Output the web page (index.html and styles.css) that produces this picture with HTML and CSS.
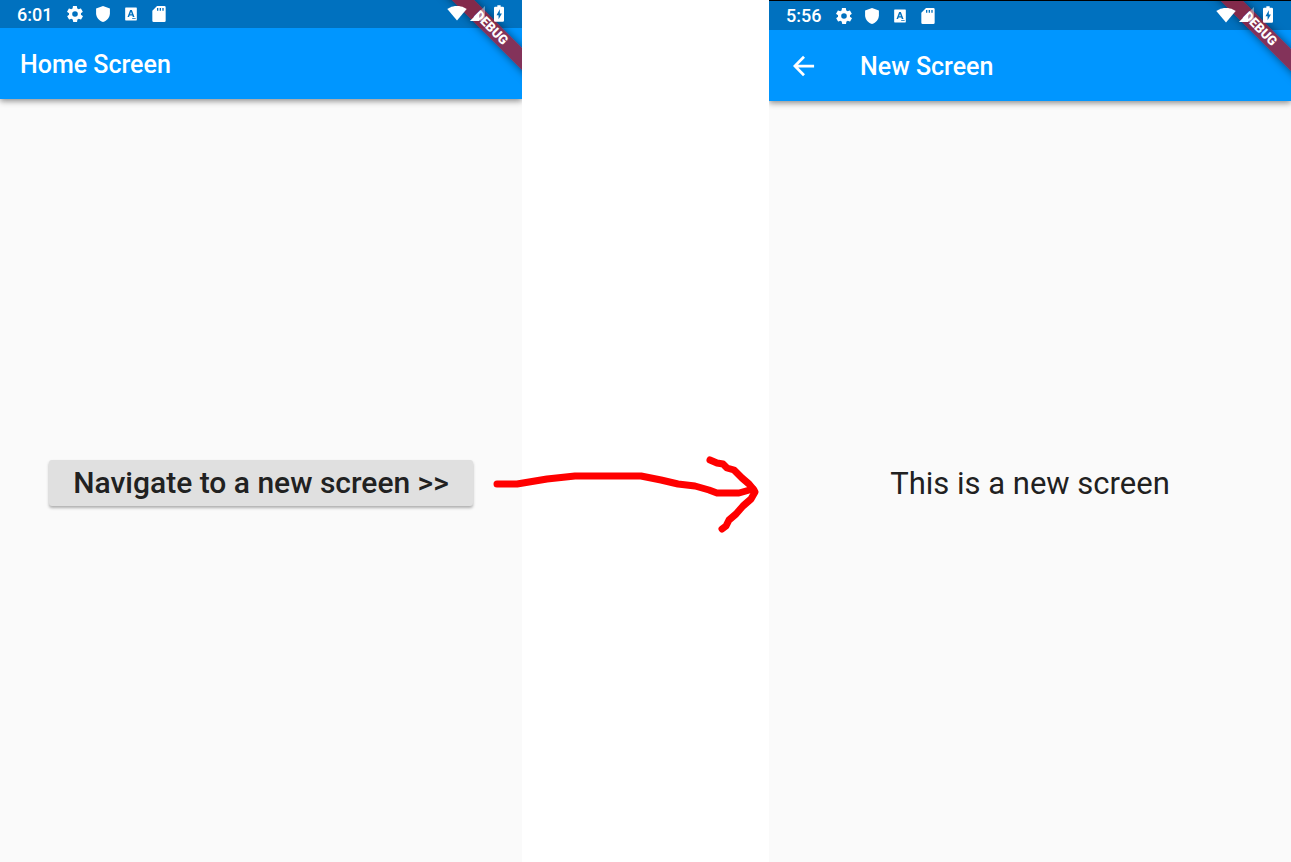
FILE: index.html
```html
<!DOCTYPE html>
<html lang="en">
<head>
    <meta charset="UTF-8">
    <meta name="viewport" content="width=device-width, initial-scale=1.0">
    <title>Navigate to a new screen</title>
    <link rel="stylesheet" href="styles.css">
</head>
<body>
    <!-- Shared status bar icons -->
    <svg class="icon-defs" aria-hidden="true">
        <symbol id="gear" viewBox="2 2 20 20">
            <path fill-rule="evenodd" d="M19.4 13c0-.3.1-.6.1-1s0-.7-.1-1l2.1-1.600c.2-.2.3-.4.1-.6l-2-3.500c-.1-.2-.4-.3-.6-.2l-2.500 1c-.5-.4-1.100-.7-1.700-1l-.4-2.600c0-.3-.2-.5-.5-.5h-4c-.2 0-.4.200-.5.400l-.4 2.700c-.6.2-1.100.6-1.700 1l-2.500-1c-.2-.1-.5 0-.6.200l-2 3.500c-.1.2-.1.5.1.6L4.600 11c0 .300-.1.700-.1 1s0 .7.100 1l-2.100 1.600c-.2.2-.3.400-.1.600l2 3.500c.1.2.4.3.6.2l2.500-1c.5.4 1.100.7 1.700 1l.4 2.600c0 .3.200.5.500.5h4c.2 0 .5-.2.500-.4l.4-2.700c.6-.2 1.200-.6 1.700-1l2.500 1c.2.1.5 0 .6-.2l2-3.500c.1-.2.1-.5-.1-.6L19.400 13zM12 15.500a3.500 3.500 0 1 1 0-7 3.500 3.500 0 0 1 0 7z"/>
        </symbol>
        <symbol id="shield" viewBox="1 1 22 22">
            <path d="M12 1L2.500 4.500V11c0 5.500 4 10.700 9.500 12 5.500-1.300 9.500-6.500 9.500-12V4.500L12 1z"/>
        </symbol>
        <symbol id="letter" viewBox="0 0 24 24">
            <path fill-rule="evenodd" d="M3 1h18a1 1 0 0 1 1 1v20a1 1 0 0 1-1 1H3a1 1 0 0 1-1-1V2a1 1 0 0 1 1-1zM10.500 5L6 17h2.700l.8-2.500h4.800l.8 2.500H18L13.500 5zM12 8l1.500 4.500h-3zM14 19v1h6v-1z"/>
        </symbol>
        <symbol id="sdcard" viewBox="0 0 24 24">
            <path fill-rule="evenodd" d="M9 0h11a2 2 0 0 1 2 2v20a2 2 0 0 1-2 2H4a2 2 0 0 1-2-2V7zM9 3v4h2V3zM13 3v4h2V3zM17 3v4h2V3z"/>
        </symbol>
        <symbol id="wifi" viewBox="0 0 24 18">
            <path d="M12 18L.4 4.200C1 3.700 5 .5 12 .5s11 3.200 11.600 3.700z"/>
        </symbol>
        <symbol id="signal" viewBox="0 0 18 18">
            <path opacity=".4" d="M0 18h18V0z"/>
            <path d="M0 18h11V7z"/>
        </symbol>
        <symbol id="battery" viewBox="0 0 12 20">
            <path fill-rule="evenodd" d="M4 0h4v2h2.500A1.500 1.500 0 0 1 12 3.500v15a1.500 1.500 0 0 1-1.500 1.500h-9A1.500 1.500 0 0 1 0 18.500v-15A1.500 1.500 0 0 1 1.500 2H4zM7 5l-4 7h2.500v5l4-7H7z"/>
        </symbol>
    </svg>

    <main class="flow">
        <section class="phone">
            <header class="header">
                <div class="status-bar">
                    <span class="time">6:01</span>
                    <svg class="status-icon"><use href="#gear"/></svg>
                    <svg class="status-icon"><use href="#shield"/></svg>
                    <svg class="status-icon small"><use href="#letter"/></svg>
                    <svg class="status-icon"><use href="#sdcard"/></svg>
                    <div class="system-icons">
                        <svg class="wifi"><use href="#wifi"/></svg>
                        <svg class="signal"><use href="#signal"/></svg>
                        <svg class="battery"><use href="#battery"/></svg>
                    </div>
                </div>
                <div class="app-bar">
                    <h1>Home Screen</h1>
                </div>
                <div class="debug"><span>DEBUG</span></div>
            </header>
            <div class="content">
                <button class="navigate-btn" type="button">Navigate to a new screen &gt;&gt;</button>
            </div>
        </section>

        <div class="link">
            <svg class="arrow" viewBox="522 412 247 140" aria-hidden="true">
                <path d="M497 484h20l30-5 28-3h66l20 4 17 4 17 2 14 4 8 3h22l14-4"/>
                <path d="M710 460l7 3 6 1 4 4 7 2 8 8 7 6 5 6 1 2-4 7-8 7-7 8-7 6-3 6-4 3"/>
            </svg>
        </div>

        <section class="phone second">
            <header class="header">
                <div class="status-bar">
                    <span class="time">5:56</span>
                    <svg class="status-icon"><use href="#gear"/></svg>
                    <svg class="status-icon"><use href="#shield"/></svg>
                    <svg class="status-icon small"><use href="#letter"/></svg>
                    <svg class="status-icon"><use href="#sdcard"/></svg>
                    <div class="system-icons">
                        <svg class="wifi"><use href="#wifi"/></svg>
                        <svg class="signal"><use href="#signal"/></svg>
                        <svg class="battery"><use href="#battery"/></svg>
                    </div>
                </div>
                <div class="app-bar">
                    <button class="back-btn" type="button" aria-label="Back">
                        <svg viewBox="0 0 24 24"><path d="M23 12H3M12 2L2 12l10 10"/></svg>
                    </button>
                    <h1>New Screen</h1>
                </div>
                <div class="debug"><span>DEBUG</span></div>
            </header>
            <div class="content">
                <p>This is a new screen</p>
            </div>
        </section>
    </main>
</body>
</html>
```
FILE: styles.css
```css
* {
    box-sizing: border-box;
}
body {
    margin: 0;
    background: #fff;
    color: #212121;
    font-family: Roboto, sans-serif;
}
.icon-defs {
    display: none;
}
.flow {
    display: grid;
    grid-template-columns: 522fr 247fr 522fr;
    min-height: 100vh;
}
.phone {
    display: flex;
    flex-direction: column;
    min-width: 0;
    background: #fafafa;
    overflow: hidden;
}
.second {
    border-top: 1px solid #000;
}
.header {
    position: relative;
    background: #0096ff;
    box-shadow: 0 2px 6px rgba(0, 0, 0, 0.45);
    color: #fff;
}
.status-bar {
    display: flex;
    align-items: center;
    gap: 12px;
    height: 28px;
    padding: 0 18px 0 17px;
    background: #0071bf;
}
.second .status-bar {
    height: 29px;
}
.time {
    margin-right: 3px;
    font-size: 18px;
    font-weight: 500;
}
.status-icon {
    width: 16px;
    height: 16px;
    fill: #fff;
}
.small {
    height: 14px;
}
/* system icons stay above the ribbon */
.system-icons {
    display: flex;
    position: relative;
    z-index: 1;
    align-items: center;
    gap: 3px;
    margin-left: auto;
    margin-bottom: 2px;
    fill: #fff;
}
.wifi {
    width: 20px;
    height: 16px;
}
.signal {
    width: 15px;
    height: 15px;
}
.battery {
    width: 10px;
    height: 17px;
    margin-left: 6px;
}
.app-bar {
    display: flex;
    align-items: center;
    height: 71px;
    padding: 3px 20px 0;
}
h1 {
    margin: 0;
    font-size: 25px;
    font-weight: 500;
    line-height: 32px;
}
.back-btn {
    display: flex;
    margin-right: 41px;
    padding: 4px 4px 6px;
    border: 0;
    background: none;
}
.back-btn svg {
    width: 22px;
    height: 22px;
    fill: none;
    stroke: #fff;
    stroke-width: 3;
}
/* corner ribbon over the bars */
.debug {
    position: absolute;
    top: 0;
    right: 0;
    width: 100px;
    height: 100%;
    overflow: hidden;
}
.debug span {
    position: absolute;
    top: 20px;
    right: -39px;
    width: 140px;
    background: rgba(172, 20, 38, 0.76);
    box-shadow: 0 0 8px rgba(0, 0, 0, 0.5);
    font-size: 13px;
    font-weight: 900;
    line-height: 16px;
    text-align: center;
    transform: rotate(45deg);
}
.content {
    display: flex;
    flex: 1;
    align-items: center;
    justify-content: center;
    padding-top: 4px;
}
.content p {
    margin: 0;
    font-size: 31px;
    line-height: 36px;
}
.navigate-btn {
    padding: 5px 24px;
    border: 0;
    border-radius: 3px;
    background: #e0e0e0;
    box-shadow: 0 2px 3px rgba(0, 0, 0, 0.3);
    color: #212121;
    font-family: inherit;
    font-size: 30px;
    font-weight: 500;
    line-height: 36px;
}
.link {
    display: flex;
    align-items: center;
    padding-top: 102px;
}
/* the stroke starts and ends over the neighbouring screens */
.arrow {
    position: relative;
    width: 100%;
    overflow: visible;
    fill: none;
    stroke: #f00;
    stroke-width: 7;
    stroke-linecap: round;
    stroke-linejoin: round;
}
```
